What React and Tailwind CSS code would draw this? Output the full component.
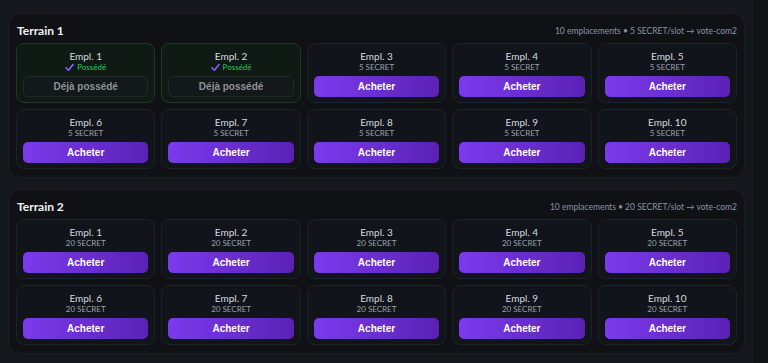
import React from "react";

function Check() {
  return (
    <svg width="9" height="9" viewBox="0 0 10 10" className="inline-block">
      <path d="M1.2 5.4 L3.8 8 L8.8 1.8" fill="none" stroke="#8b5cf6" strokeWidth="1.8" strokeLinecap="round" strokeLinejoin="round" />
    </svg>
  );
}

function Slot({ n, price, owned }) {
  if (owned) {
    return (
      <div className="h-[60px] rounded-[8px] border border-[#1d3a26] bg-[#0f1a14] px-[6px] pt-[6px] flex flex-col items-center">
        <div className="text-[10px] leading-[13px] text-[#d6dae0]">Empl. {n}</div>
        <div className="flex items-center gap-[3px] text-[8px] leading-[9px] h-[9px] text-[#22c55e]">
          <Check />
          <span>Possédé</span>
        </div>
        <div className="mt-[4px] w-full h-[21px] rounded-[5px] border border-[#1f2a25] bg-[#13191a] flex items-center justify-center text-[10px] font-bold text-[#8c9196] font-['Liberation_Sans',Arial,sans-serif]">
          Déjà possédé
        </div>
      </div>
    );
  }
  return (
    <div className="h-[60px] rounded-[8px] border border-[#1d2128] bg-[#11141a] px-[6px] pt-[6px] flex flex-col items-center">
      <div className="text-[10px] leading-[13px] text-[#d6dae0]">Empl. {n}</div>
      <div className="text-[8px] leading-[9px] h-[9px] text-[#9aa1ab]">{price} SECRET</div>
      <div className="mt-[4px] w-full h-[21px] rounded-[5px] bg-gradient-to-r from-[#7c3aed] to-[#5b21b6] flex items-center justify-center text-[10px] font-bold text-white font-['Liberation_Sans',Arial,sans-serif]">
        Acheter
      </div>
    </div>
  );
}

function Terrain({ title, price, ownedSet }) {
  const slots = Array.from({ length: 10 }, (_, i) => i + 1);
  return (
    <div className="rounded-[12px] border border-[#1a1d23] bg-[#0f1115] px-[7px] pt-[10px] pb-[8px]">
      <div className="flex items-center justify-between h-[14px] mb-[5px] pl-[1px] pr-[0px]">
        <div className="text-[12px] font-bold text-[#f1f3f6]">{title}</div>
        <div className="text-[8.5px] text-[#8b93a0]">
          10 emplacements • {price} SECRET/slot → vote-com2
        </div>
      </div>
      <div className="grid grid-cols-5 gap-[6px]">
        {slots.map((n) => (
          <Slot key={n} n={n} price={price} owned={ownedSet.includes(n)} />
        ))}
      </div>
    </div>
  );
}

export default function App() {
  return (
    <div className="w-[768px] h-[363px] overflow-hidden bg-[#14171c] flex font-['Lato','Noto_Sans',sans-serif]">
      <div className="flex-1 flex flex-col">
        <div className="h-[5px] border-b border-[#181b21] bg-[#14171c]" />
        <div className="pl-[8px] pr-[7px] pt-[8px] flex flex-col gap-[11px]">
          <Terrain title="Terrain 1" price={5} ownedSet={[1, 2]} />
          <Terrain title="Terrain 2" price={20} ownedSet={[]} />
        </div>
      </div>
      <div className="w-[16px] bg-[#111317] border-l border-[#1a1d22]" />
    </div>
  );
}
